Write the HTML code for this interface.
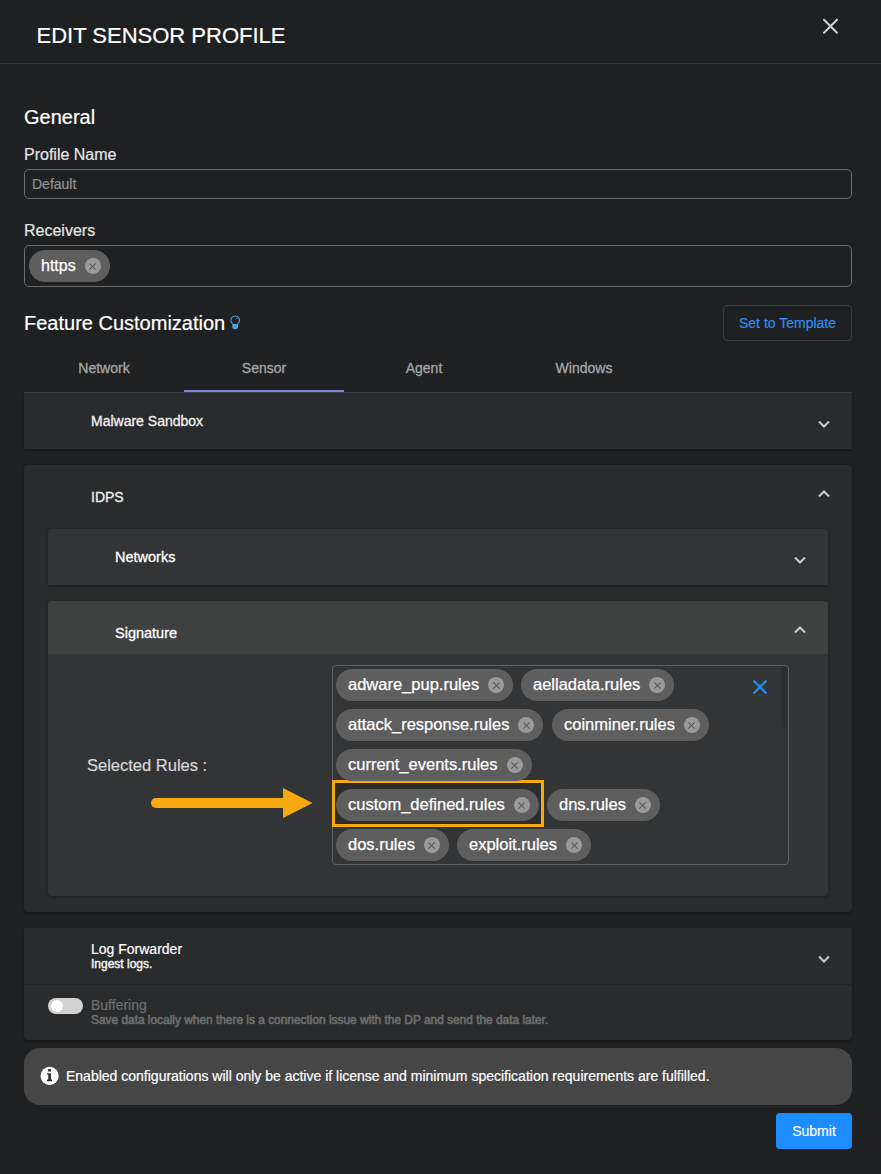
<!DOCTYPE html>
<html><head><meta charset="utf-8">
<style>
*{box-sizing:border-box;margin:0;padding:0}
html,body{width:881px;height:1174px;overflow:hidden;background:#1f2022;font-family:"Liberation Sans",sans-serif;color:#fff}
.a{position:absolute}
.t{position:absolute;line-height:1;white-space:nowrap}
.t{-webkit-text-stroke:0.2px currentColor}
.h{-webkit-text-stroke:0.3px currentColor}
.panel{position:absolute;background:#2a2b2d;border-radius:4px}
.chev{position:absolute;width:14px;height:10px}
.chip{position:absolute;height:32px;border-radius:16px;background:#5e5e5e;padding-left:12px;display:flex;align-items:center;white-space:nowrap}
.chip span{font-size:16.5px;line-height:1;color:#fff;position:relative;top:-1px;-webkit-text-stroke:0.25px #fff}
.chip i{display:block;width:16px;height:16px;border-radius:8px;background:#9a9a9a;margin-left:9px;margin-right:9px;position:relative}
.chip i:before,.chip i:after{content:"";position:absolute;left:3.5px;top:7.5px;width:9px;height:1px;background:#555}
.chip i:before{transform:rotate(45deg)}
.chip i:after{transform:rotate(-45deg)}
</style></head><body>

<!-- header -->
<div class="t" style="left:36.5px;top:24.6px;font-size:22px;color:#fff">EDIT SENSOR PROFILE</div>
<svg class="a" style="left:822px;top:18px" width="17" height="17" viewBox="0 0 17 17"><path d="M2 1.8L15 14.8M15 1.8L2 14.8" stroke="#d0d0d0" stroke-width="2" stroke-linecap="round"/></svg>
<div class="a" style="left:0;top:63px;width:881px;height:1px;background:#333438"></div>

<!-- General -->
<div class="t" style="left:24px;top:107.1px;font-size:20px;color:#fff">General</div>
<div class="t" style="left:24px;top:146.5px;font-size:16px;color:#e6e6e6">Profile Name</div>
<div class="a" style="left:24px;top:169px;width:828px;height:30px;border:1px solid #6e6e6e;border-radius:5px"></div>
<div class="t" style="left:32px;top:176.7px;font-size:14px;color:#959595">Default</div>

<div class="t" style="left:24px;top:222.5px;font-size:16px;color:#e6e6e6">Receivers</div>
<div class="a" style="left:24px;top:245px;width:828px;height:42px;border:1px solid #6e6e6e;border-radius:5px"></div>
<div class="chip" style="left:29px;top:250px"><span style="font-size:16px;top:-0.3px">https</span><i></i></div>

<!-- Feature customization -->
<div class="t" style="left:24px;top:312.5px;font-size:20px;color:#fff">Feature Customization</div>
<svg class="a" style="left:229px;top:314px" width="13" height="16" viewBox="0 0 13 16"><path d="M3.9 9.9A4.3 4.3 0 1 1 8.5 9.9" fill="none" stroke="#4ea2d8" stroke-width="1.1"/><path d="M3.3 10H9.1V12.8A2.9 2.5 0 0 1 3.3 12.8Z" fill="#4ea2d8"/><path d="M6.9 4A2.6 2.6 0 0 1 8.4 5.2" fill="none" stroke="#4ea2d8" stroke-width="0.9"/></svg>
<div class="a" style="left:723px;top:305px;width:129px;height:36px;border:1px solid #3c3d40;border-radius:4px"></div>
<div class="t" style="left:739px;top:316.1px;font-size:14px;color:#2f8ef4">Set to Template</div>

<!-- tabs -->
<div class="t" style="left:24px;top:361.4px;width:160px;text-align:center;font-size:14px;color:#a6a6a6;-webkit-text-stroke:0.3px #a6a6a6">Network</div>
<div class="t" style="left:184px;top:361.4px;width:160px;text-align:center;font-size:14px;color:#a6a6a6;-webkit-text-stroke:0.3px #a6a6a6">Sensor</div>
<div class="t" style="left:344px;top:361.4px;width:160px;text-align:center;font-size:14px;color:#a6a6a6;-webkit-text-stroke:0.3px #a6a6a6">Agent</div>
<div class="t" style="left:504px;top:361.4px;width:160px;text-align:center;font-size:14px;color:#a6a6a6;-webkit-text-stroke:0.3px #a6a6a6">Windows</div>

<!-- Malware Sandbox -->
<div class="panel" style="left:24px;top:392px;width:828px;height:57px;border-radius:4px 4px 0 0;box-shadow:0 1px 3px rgba(0,0,0,0.35)"></div>
<div class="a" style="left:24px;top:392px;width:828px;height:1px;background:#3a3b3e"></div>
<div class="a" style="left:184px;top:390px;width:160px;height:2px;background:#7b82d8"></div>
<div class="t h" style="left:91px;top:414.1px;font-size:14px;color:#f2f2f2">Malware Sandbox</div>
<svg class="chev" style="left:817px;top:419px" viewBox="0 0 14 10"><path d="M2 2.5L7 7.5L12 2.5" fill="none" stroke="#cdcdcd" stroke-width="2"/></svg>

<!-- IDPS -->
<div class="panel" style="left:24px;top:465px;width:828px;height:447px;box-shadow:0 1px 3px rgba(0,0,0,0.35)"></div>
<div class="t h" style="left:91px;top:489.8px;font-size:14px;color:#f2f2f2">IDPS</div>
<svg class="chev" style="left:817px;top:489px" viewBox="0 0 14 10"><path d="M2 7.5L7 2.5L12 7.5" fill="none" stroke="#cdcdcd" stroke-width="2"/></svg>

<!-- Networks -->
<div class="panel" style="left:48px;top:529px;width:780px;height:56px;border-radius:4px 4px 0 0;background:#333436;box-shadow:0 1px 3px rgba(0,0,0,0.35)"></div>
<div class="t h" style="left:115px;top:549.8px;font-size:14.5px;color:#fff">Networks</div>
<svg class="chev" style="left:793px;top:555px" viewBox="0 0 14 10"><path d="M2 2.5L7 7.5L12 2.5" fill="none" stroke="#cdcdcd" stroke-width="2"/></svg>

<!-- Signature -->
<div class="panel" style="left:48px;top:601px;width:780px;height:295px;background:#333436;box-shadow:0 1px 3px rgba(0,0,0,0.35);overflow:hidden">
  <div class="a" style="left:0;top:0;width:780px;height:53px;background:#3f4141"></div>
</div>
<div class="t h" style="left:115px;top:625.8px;font-size:14.5px;color:#fff">Signature</div>
<svg class="chev" style="left:793px;top:625px" viewBox="0 0 14 10"><path d="M2 7.5L7 2.5L12 7.5" fill="none" stroke="#cdcdcd" stroke-width="2"/></svg>

<div class="t" style="left:87px;top:757px;font-size:16.5px;color:#d9d9d9">Selected Rules :</div>

<!-- arrow -->
<svg class="a" style="left:145px;top:785px" width="172" height="36" viewBox="0 0 172 36"><path d="M11 18H140" stroke="#f6aa0f" stroke-width="10" stroke-linecap="round"/><path d="M138 3L167.5 18L138 33z" fill="#f6aa0f"/></svg>

<!-- rules box -->
<div class="a" style="left:332px;top:665px;width:457px;height:200px;border:1px solid #5f6062;border-radius:4px"></div>
<div class="a" style="left:781px;top:666px;width:6px;height:62px;background:#2d2e30;border-radius:3px"></div>
<svg class="a" style="left:752px;top:679px" width="16" height="16" viewBox="0 0 16 16"><path d="M1.5 1.5L14.5 14.5M14.5 1.5L1.5 14.5" stroke="#1e8fff" stroke-width="2"/></svg>

<div class="a" style="left:332px;top:780px;width:212px;height:47px;border:3.5px solid #f6aa0f;background:#2b2c2e"></div>

<div class="chip" style="left:336px;top:669px"><span>adware_pup.rules</span><i></i></div>
<div class="chip" style="left:521px;top:669px"><span>aelladata.rules</span><i></i></div>
<div class="chip" style="left:336px;top:709px"><span>attack_response.rules</span><i></i></div>
<div class="chip" style="left:552px;top:709px"><span>coinminer.rules</span><i></i></div>
<div class="chip" style="left:336px;top:749px"><span>current_events.rules</span><i></i></div>
<div class="chip" style="left:336px;top:789px"><span>custom_defined.rules</span><i></i></div>
<div class="chip" style="left:547px;top:789px"><span>dns.rules</span><i></i></div>
<div class="chip" style="left:336px;top:829px"><span>dos.rules</span><i></i></div>
<div class="chip" style="left:457px;top:829px"><span>exploit.rules</span><i></i></div>

<!-- Log forwarder -->
<div class="panel" style="left:24px;top:928px;width:828px;height:112px;border-radius:0 0 4px 4px;box-shadow:0 1px 3px rgba(0,0,0,0.35)"></div>
<div class="a" style="left:24px;top:984px;width:828px;height:1px;background:#222325"></div>
<div class="t" style="left:91px;top:942.1px;font-size:14px;color:#fff">Log Forwarder</div>
<div class="t" style="left:91px;top:957.6px;font-size:12px;color:#f0f0f0;-webkit-text-stroke:0.45px #f0f0f0">Ingest logs.</div>
<svg class="chev" style="left:817px;top:954px" viewBox="0 0 14 10"><path d="M2 2.5L7 7.5L12 2.5" fill="none" stroke="#cdcdcd" stroke-width="2"/></svg>

<div class="a" style="left:48px;top:998px;width:35px;height:16px;border-radius:8px;background:#d2d2d2"></div>
<div class="a" style="left:51px;top:1000px;width:12px;height:12px;border-radius:6px;background:#fff"></div>
<div class="t" style="left:91px;top:998.1px;font-size:14px;color:#6f6f6f">Buffering</div>
<div class="t" style="left:91px;top:1014.7px;font-size:11.9px;color:#6e6e6e;-webkit-text-stroke:0.6px #6e6e6e">Save data locally when there is a connection issue with the DP and send the data later.</div>

<!-- info banner -->
<div class="a" style="left:24px;top:1048px;width:828px;height:57px;border-radius:16px;background:#464647"></div>
<svg class="a" style="left:40px;top:1066px" width="20" height="20" viewBox="0 0 20 20"><circle cx="9.6" cy="9.9" r="9.1" fill="#fff"/><rect x="8.1" y="3.1" width="2.8" height="2.4" fill="#2a2a2a"/><path d="M7 7.2H10.9V13.5H12V15.2H7V13.5H8.3V8.6H7Z" fill="#2a2a2a"/></svg>
<div class="t" style="left:66px;top:1069.4px;font-size:14px;color:#fff">Enabled configurations will only be active if license and minimum specification requirements are fulfilled.</div>

<!-- submit -->
<div class="a" style="left:776px;top:1113px;width:76px;height:36px;border-radius:4px;background:#1d8cff"></div>
<div class="t" style="left:776px;top:1124.1px;width:76px;text-align:center;font-size:14px;color:#fff">Submit</div>

</body></html>
